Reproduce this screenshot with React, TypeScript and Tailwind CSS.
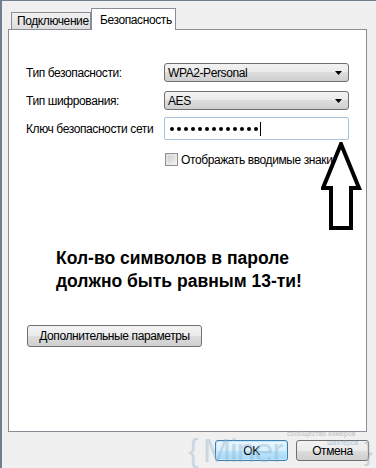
import React from "react";

const ui = "font-['Liberation_Sans',Arial,sans-serif] text-[12px] tracking-[-0.4px] text-black";

function Combo({ value }: { value: string }) {
  return (
    <div className="flex h-[19px] w-[185px] items-center justify-between rounded-[3px] border border-[#707070] bg-[linear-gradient(#f2f2f2_0%,#ebebeb_50%,#dddddd_50%,#cfcfcf_100%)] pl-[3px] pr-[6px]">
      <span className="leading-none">{value}</span>
      <svg width="7" height="4" viewBox="0 0 7 4">
        <path d="M0 0h7L3.5 4z" fill="#000" />
      </svg>
    </div>
  );
}

function WinButton({ label, className = "" }: { label: string; className?: string }) {
  return (
    <div
      className={
        "flex items-center justify-center rounded-[3px] border border-[#707070] bg-[linear-gradient(#f2f2f2_0%,#ebebeb_50%,#dddddd_50%,#cfcfcf_100%)] " +
        className
      }
    >
      {label}
    </div>
  );
}

export default function App() {
  return (
    <div className={"relative h-[468px] w-[376px] overflow-hidden border-l-2 border-t border-[#6f7f90] bg-[#f0f0f0] pl-[6px] pt-[7px] " + ui}>
      {/* tabs */}
      <div className="flex h-[21px] items-end">
        <div className="ml-[3px] flex h-[17px] w-[80px] items-center whitespace-nowrap border border-b-0 border-[#898c95] bg-[linear-gradient(#f2f2f2,#dcdcdc)] pl-[5px]">
          Подключение
        </div>
        <div className="relative z-10 -mb-px flex h-[22px] w-[85px] items-center whitespace-nowrap border border-b-0 border-[#898c95] bg-white pl-[8px]">
          Безопасность
        </div>
      </div>

      {/* panel */}
      <div className="relative h-[403px] w-[359px] border border-[#898c95] bg-white pl-[17px] pt-[33px]">
        <div className="flex h-[19px] items-center">
          <span className="w-[138px] whitespace-nowrap">Тип безопасности:</span>
          <Combo value="WPA2-Personal" />
        </div>
        <div className="mt-[9px] flex h-[19px] items-center">
          <span className="w-[138px] whitespace-nowrap">Тип шифрования:</span>
          <Combo value="AES" />
        </div>
        <div className="mt-[7px] flex h-[23px] items-center">
          <span className="w-[138px] whitespace-nowrap">Ключ безопасности сети</span>
          <div className="flex h-[23px] w-[185px] items-center rounded-[2px] border border-[#a6c3df] pl-[5px]">
            <div className="flex gap-[3px]">
              {Array.from({ length: 13 }).map((_, i) => (
                <span key={i} className="h-[4px] w-[4px] rounded-full bg-black" />
              ))}
            </div>
            <span className="ml-[2px] h-[14px] w-px bg-black" />
          </div>
        </div>
        <div className="ml-[139px] mt-[13px] flex h-[13px] items-center gap-[3px]">
          <span className="h-[13px] w-[13px] border border-[#8f8f8f] bg-[linear-gradient(135deg,#dcdcdc,#f4f4f4)] p-[2px]">
            <span className="block h-full w-full bg-[linear-gradient(135deg,#cfcfcf,#ececec)]" />
          </span>
          <span className="whitespace-nowrap">Отображать вводимые знаки</span>
        </div>

        <div className="ml-[30px] mt-[81px] font-['Liberation_Sans',Arial,sans-serif] text-[17.5px] font-bold leading-[23px] tracking-normal">
          <div>Кол-во символов в пароле</div>
          <div>должно быть равным 13-ти!</div>
        </div>

        <WinButton label="Дополнительные параметры" className="ml-[1px] mt-[32px] h-[22px] w-[175px]" />

        {/* annotation arrow */}
        <svg className="absolute left-[312px] top-[112px]" width="42" height="90" viewBox="0 0 42 90">
          <path
            d="M20 2 L38 46 L30 46 L30 86 L10 86 L10 46 L2 46 Z"
            fill="none"
            stroke="#000"
            strokeWidth="4"
            strokeLinejoin="miter"
          />
        </svg>
      </div>

      {/* bottom buttons */}
      <div className="mt-[8px] flex justify-end gap-[8px] pr-[7px]">
        <div className="relative z-10 flex h-[21px] w-[73px] items-center justify-center rounded-[3px] border border-[#3c7fb1] bg-[linear-gradient(#eaf6fd_0%,#d9f0fc_50%,#bee6fd_50%,#a7d9f5_100%)] shadow-[inset_0_0_0_1px_#c7e8fb]">
          OK
        </div>
        <WinButton label="Отмена" className="relative z-10 h-[21px] w-[73px]" />
      </div>

      {/* watermark */}
      <div className="pointer-events-none absolute left-[186px] top-[432px] z-20 flex items-center font-['Liberation_Sans',sans-serif] tracking-normal text-[#8fb2cc] opacity-40">
        <span className="text-[32px] font-light leading-none">{"{"}</span>
        <span className="ml-[4px] text-[34px] leading-none tracking-[-1px]">Miner</span>
      </div>
      <div className="pointer-events-none absolute left-[285px] top-[428px] z-20 text-[7px] leading-[9px] tracking-normal text-[#a0a0a0] opacity-60">
        <div>сообщество комеров</div>
        <div className="pl-[40px] text-[#7fa9c9]">шахтеров</div>
      </div>
      <span className="pointer-events-none absolute left-[362px] top-[438px] z-20 font-['Liberation_Sans',sans-serif] text-[26px] font-light leading-none text-[#b0b0b0] opacity-50">
        {"}"}
      </span>
    </div>
  );
}
